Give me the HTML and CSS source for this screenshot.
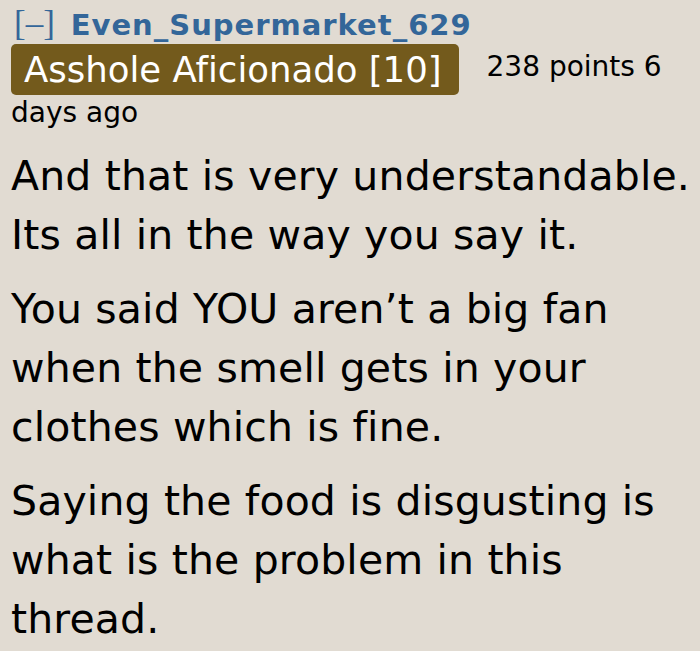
FILE: index.html
```html
<!DOCTYPE html>
<html>
<head>
<meta charset="utf-8">
<link rel="stylesheet" href="styles.css">
</head>
<body>
<div class="comment">
  <p class="tagline"><span class="expand">[–]</span> <span class="author">Even_Supermarket_629</span> <span class="flair">Asshole Aficionado [10]</span> <span class="score">238 points 6 days ago</span></p>
  <div class="md">
    <p>And that is very understandable. Its all in the way you say it.</p>
    <p>You said YOU aren’t a big fan when the smell gets in your clothes which is fine.</p>
    <p>Saying the food is disgusting is what is the problem in this thread.</p>
  </div>
</div>
</body>
</html>
```
FILE: styles.css
```css
html, body {
  margin: 0;
  background: #e1dbd2;
}
body {
  font-family: "DejaVu Sans", Verdana, sans-serif;
  color: #000;
  font-variant-ligatures: none;
}
.comment {
  padding: 0 0 0 11px;
}
.tagline {
  margin: 0;
  padding: 6px 10px 0 0;
  font-size: 28px;
  line-height: 36px;
}
.expand {
  font-family: "Liberation Serif", serif;
  color: #336699;
  font-size: 35px;
  padding-left: 3px;
}
.author {
  color: #336699;
  font-weight: bold;
  font-size: 29px;
  letter-spacing: 1px;
  margin-left: 7px;
}
.flair {
  display: inline-block;
  background: #735a1c;
  color: #fff;
  font-size: 35.5px;
  line-height: 51px;
  padding: 0 17px 0 13px;
  border-radius: 5px;
  margin: 0 19px 0 0;
  vertical-align: -6px;
}
.score {
  color: #000;
}
.md {
  margin-top: 16px;
}
.md p {
  margin: 0 0 15px;
  font-size: 41px;
  line-height: 59px;
  letter-spacing: 0.15px;
}
```
